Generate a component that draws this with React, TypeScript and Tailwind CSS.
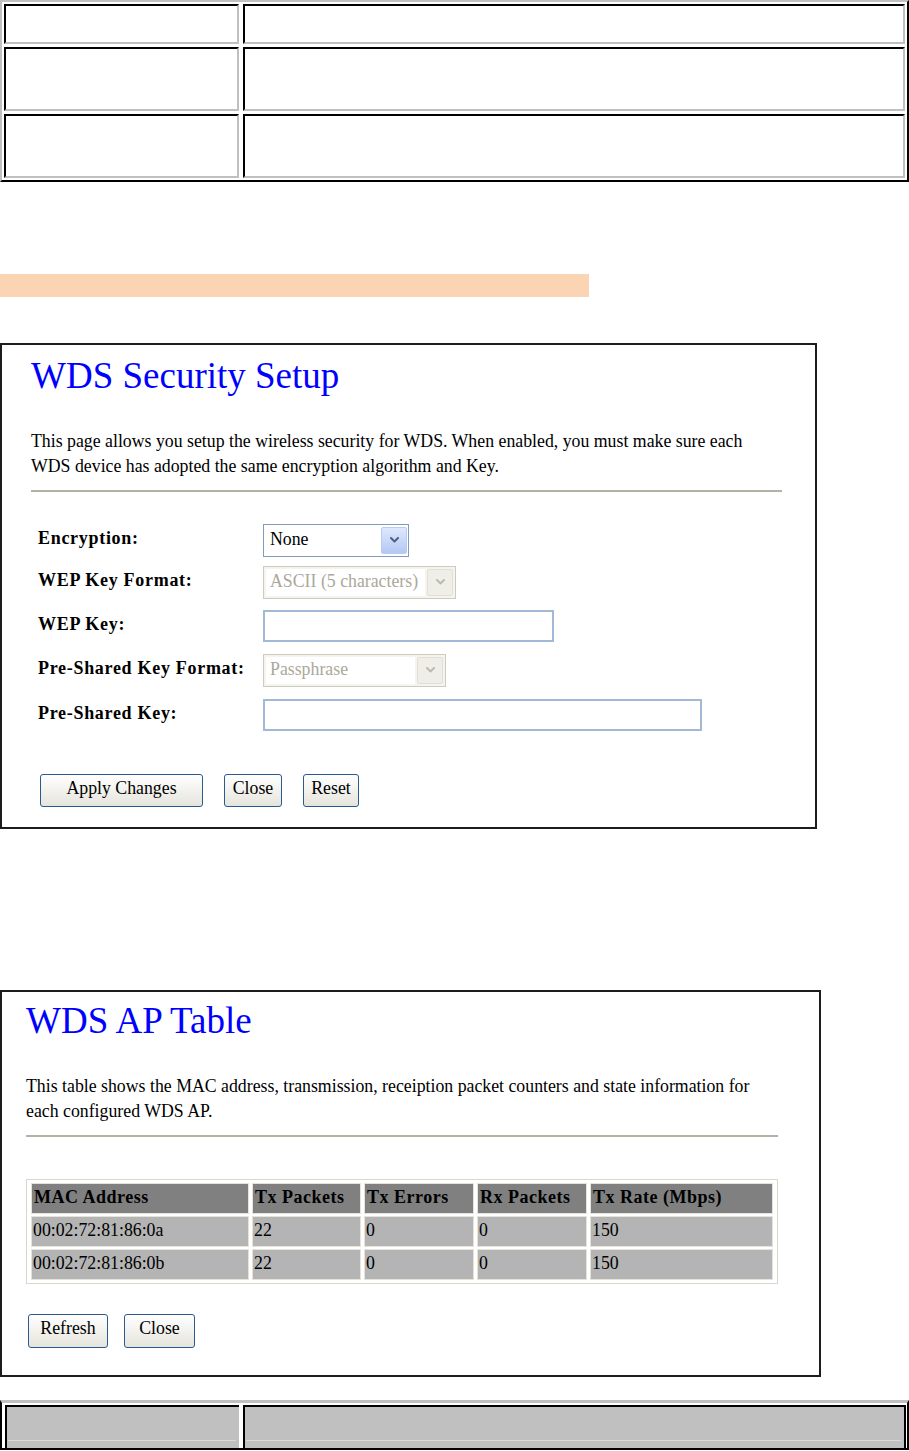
import type { ReactNode } from 'react'

const serif = 'font-["Liberation_Serif","Times_New_Roman",serif]'

function Chevron({ color }: { color: string }) {
  return (
    <svg width="9" height="6" viewBox="0 0 9 6" fill="none">
      <polyline points="1,1 4.5,4.5 8,1" stroke={color} strokeWidth="2" strokeLinecap="round" strokeLinejoin="round" />
    </svg>
  )
}

function ActiveSelect({ value, width }: { value: string; width: string }) {
  return (
    <div className={`${width} h-[33px] flex items-center border border-[#7f9db9] bg-white`}>
      <span className="flex-1 pl-[6px] pb-[2px] text-[17.8px] leading-[20px] text-black">{value}</span>
      <span className="w-[26px] h-[27px] mr-[1px] flex items-center justify-center rounded-[2px] border border-[#b9cbf3] bg-linear-to-b from-[#dfe8fd] to-[#b4c8f5]">
        <Chevron color="#4d6185" />
      </span>
    </div>
  )
}

function DisabledSelect({ value, width }: { value: string; width: string }) {
  return (
    <div className={`${width} h-[33px] flex items-center border border-[#cdcbbe] bg-[#f5f4ee] p-[2px] gap-[2px]`}>
      <span className="flex-1 h-full flex items-center bg-white pl-[4px] pb-[2px] text-[17.8px] leading-[20px] text-[#aca899] whitespace-nowrap overflow-hidden">
        {value}
      </span>
      <span className="w-[26px] h-[27px] flex items-center justify-center rounded-[2px] border border-[#e2e0d6] bg-[#efeee8]">
        <Chevron color="#bdbbae" />
      </span>
    </div>
  )
}

function TextBox({ width }: { width: string }) {
  return <div className={`${width} h-[32px] border-2 border-[#a2b8d7] bg-white`} />
}

function XpButton({ children, width, height = 'h-[33px]' }: { children: ReactNode; width: string; height?: string }) {
  return (
    <button
      type="button"
      className={`${width} ${height} flex items-center justify-center pb-[6px] rounded-[3px] border-[1.5px] border-[#2a5a90] bg-linear-to-b from-white to-[#e5e4dc] text-[17.8px] leading-[20px] text-black`}
    >
      {children}
    </button>
  )
}

function FormRow({ label, height, children }: { label: string; height: string; children: ReactNode }) {
  return (
    <div className={`flex items-center ${height}`}>
      <span className="w-[225px] mb-[4px] text-[18px] leading-[20px] font-bold tracking-[0.7px] text-black whitespace-nowrap">
        {label}
      </span>
      {children}
    </div>
  )
}

function TopTable() {
  const cell = 'border-2 border-t-black border-l-black border-r-[#c0c0c0] border-b-[#c0c0c0]'
  const rows = ['h-[40px]', 'h-[64px]', 'h-[64px]']
  return (
    <div className="w-[909px] border-2 border-t-[#c0c0c0] border-l-[#c0c0c0] border-r-black border-b-black p-[2px] flex flex-col gap-[3px]">
      {rows.map((h, i) => (
        <div key={i} className="grid grid-cols-[235px_1fr] gap-[4px]">
          <div className={`${cell} ${h}`} />
          <div className={`${cell} ${h}`} />
        </div>
      ))}
    </div>
  )
}

function SecurityPanel() {
  return (
    <div className="w-[817px] mt-[46px] border-2 border-[#1c1c1c] pt-[12px] pl-[29px] pb-[20px]">
      <h1 className="text-[37px] leading-[37px] text-[#0000ff] font-normal">WDS Security Setup</h1>
      <p className="mt-[35px] text-[17.8px] leading-[25px] text-black whitespace-nowrap">
        This page allows you setup the wireless security for WDS. When enabled, you must make sure each
        <br />
        WDS device has adopted the same encryption algorithm and Key.
      </p>
      <div className="mt-[11px] w-[751px] h-[2px] bg-[#b4b1a5]" />
      <div className="mt-[27px] pl-[7px]">
        <FormRow label="Encryption:" height="h-[42px]">
          <ActiveSelect value="None" width="w-[146px]" />
        </FormRow>
        <FormRow label="WEP Key Format:" height="h-[42px]">
          <DisabledSelect value="ASCII (5 characters)" width="w-[193px]" />
        </FormRow>
        <FormRow label="WEP Key:" height="h-[45px]">
          <TextBox width="w-[291px]" />
        </FormRow>
        <FormRow label="Pre-Shared Key Format:" height="h-[44px]">
          <DisabledSelect value="Passphrase" width="w-[183px]" />
        </FormRow>
        <FormRow label="Pre-Shared Key:" height="h-[45px]">
          <TextBox width="w-[439px]" />
        </FormRow>
      </div>
      <div className="mt-[37px] ml-[9px] flex gap-[21px]">
        <XpButton width="w-[163px]">Apply Changes</XpButton>
        <XpButton width="w-[58px]">Close</XpButton>
        <XpButton width="w-[56px]">Reset</XpButton>
      </div>
    </div>
  )
}

const headers = ['MAC Address', 'Tx Packets', 'Tx Errors', 'Rx Packets', 'Tx Rate (Mbps)']
const apRows = [
  ['00:02:72:81:86:0a', '22', '0', '0', '150'],
  ['00:02:72:81:86:0b', '22', '0', '0', '150'],
]

function ApTablePanel() {
  return (
    <div className="w-[821px] mt-[161px] border-2 border-[#1c1c1c] pt-[10px] pl-[24px] pb-[27px]">
      <h1 className="text-[37px] leading-[37px] text-[#0000ff] font-normal">WDS AP Table</h1>
      <p className="mt-[35px] text-[17.8px] leading-[25px] text-black whitespace-nowrap">
        This table shows the MAC address, transmission, receiption packet counters and state information for
        <br />
        each configured WDS AP.
      </p>
      <div className="mt-[11px] w-[752px] h-[2px] bg-[#b4b1a5]" />
      <div className="mt-[42px] w-fit border border-[#d9d6cb] px-[4px] py-[3px] grid grid-cols-[218px_109px_110px_110px_183px] gap-x-[3px] gap-y-[2px]">
        {headers.map((h) => (
          <div
            key={h}
            className="h-[31px] border border-[#e6e4da] bg-[#808080] pl-[2px] pb-[3px] flex items-center text-[18px] leading-[20px] font-bold tracking-[0.5px] text-black whitespace-nowrap"
          >
            {h}
          </div>
        ))}
        {apRows.map((r) =>
          r.map((v, i) => (
            <div
              key={`${r[0]}-${i}`}
              className="h-[31px] border border-[#e6e4da] bg-[#b4b4b4] pl-[1px] pb-[3px] flex items-center text-[17.8px] leading-[20px] text-black"
            >
              {v}
            </div>
          )),
        )}
      </div>
      <div className="mt-[30px] ml-[2px] flex gap-[16px]">
        <XpButton width="w-[80px]" height="h-[34px]">Refresh</XpButton>
        <XpButton width="w-[71px]" height="h-[34px]">Close</XpButton>
      </div>
    </div>
  )
}

function BottomTable() {
  return (
    <div className="w-[909px] mt-[23px] border-t-[3px] border-t-[#c0c0c0] border-x-2 border-x-black border-b-2 border-b-black pt-[2px] pl-[3px] pr-[1px] grid grid-cols-[234px_1fr] gap-[4px]">
      <div className="h-[43px] bg-[#c0c0c0] border-t-2 border-l-2 border-black flex flex-col justify-end pb-[7px]">
        <div className="h-px ml-[1px] mr-[3px] bg-[#d9d9d9]" />
      </div>
      <div className="h-[43px] bg-[#c0c0c0] border-t-2 border-l-2 border-r-2 border-black flex flex-col justify-end pb-[7px]">
        <div className="h-px ml-[1px] mr-[3px] bg-[#d9d9d9]" />
      </div>
    </div>
  )
}

export default function App() {
  return (
    <div className={`${serif} w-[909px] h-[1451px] overflow-hidden bg-white`}>
      <TopTable />
      <div className="mt-[92px] w-[589px] h-[23px] bg-[#fbd4b4]" />
      <SecurityPanel />
      <ApTablePanel />
      <BottomTable />
    </div>
  )
}
